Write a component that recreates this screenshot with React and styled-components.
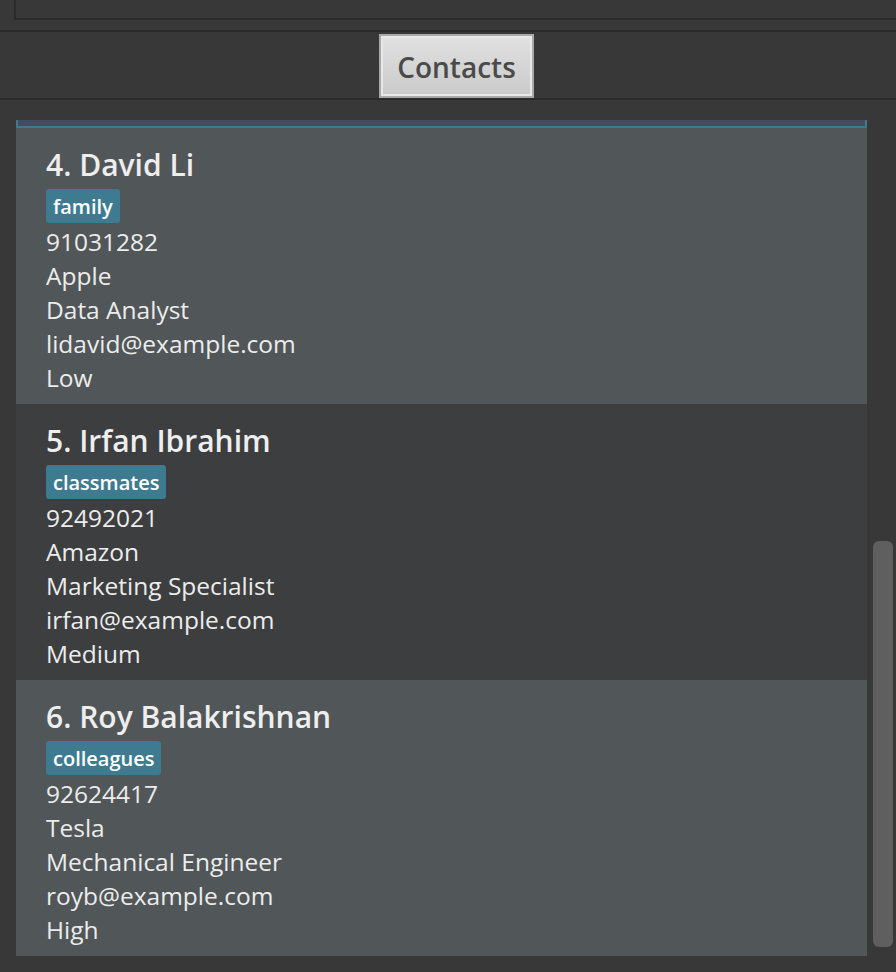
import React from 'react';
import styled, { createGlobalStyle } from 'styled-components';

const GlobalStyle = createGlobalStyle`
  html, body {
    margin: 0;
    padding: 0;
    background: #383838;
    overflow: hidden;
  }
  body {
    font-family: "Open Sans", "Noto Sans", "Liberation Sans", sans-serif;
  }
`;

const contacts = [
  { id: 3, name: '', tags: [], details: [], selected: true },
  {
    id: 4,
    name: 'David Li',
    tags: ['family'],
    details: ['91031282', 'Apple', 'Data Analyst', 'lidavid@example.com', 'Low'],
  },
  {
    id: 5,
    name: 'Irfan Ibrahim',
    tags: ['classmates'],
    details: ['92492021', 'Amazon', 'Marketing Specialist', 'irfan@example.com', 'Medium'],
  },
  {
    id: 6,
    name: 'Roy Balakrishnan',
    tags: ['colleagues'],
    details: ['92624417', 'Tesla', 'Mechanical Engineer', 'royb@example.com', 'High'],
  },
];

const scrollOffset = 268;

const Page = styled.div`
  width: 896px;
  height: 972px;
  display: flex;
  flex-direction: column;
  background: #383838;
`;

const TopPanel = styled.div`
  height: 30px;
  border-bottom: 2px solid #2b2b2b;
  padding-left: 14px;
  box-sizing: content-box;
`;

const ResultBox = styled.div`
  height: 18px;
  border-left: 2px solid #2b2b2b;
  border-bottom: 2px solid #2b2b2b;
`;

const ButtonBar = styled.div`
  height: 64px;
  padding-top: 2px;
  display: flex;
  justify-content: center;
  border-bottom: 2px solid #2b2b2b;
`;

const TabButton = styled.button`
  height: 64px;
  width: 155px;
  margin-left: 17px;
  box-sizing: border-box;
  border: 2px solid #a9a9a9;
  box-shadow: inset 0 0 0 2px #e8e8e8;
  background: linear-gradient(#e1e1e1, #cacaca);
  color: #4a4a4a;
  font-family: "Open Sans", "Noto Sans", sans-serif;
  font-size: 28px;
  font-weight: 600;
  padding: 0;
  padding-top: 1px;
`;

const ListArea = styled.div`
  flex: 1;
  display: flex;
  padding-top: 20px;
`;

const Viewport = styled.div`
  width: 851px;
  height: 836px;
  margin-left: 16px;
  overflow: hidden;
`;

const Card = styled.div`
  height: 276px;
  box-sizing: border-box;
  padding: 20px 0 0 30px;
  background: ${(props) => (props.selected ? '#424d5f' : props.odd ? '#515658' : '#3c3e3f')};
  border: ${(props) => (props.selected ? '2px solid #3e7b91' : 'none')};
`;

const Name = styled.div`
  height: 34px;
  line-height: 34px;
  margin-bottom: 7px;
  color: #eeeeee;
  font-size: 30px;
  font-weight: 600;
  white-space: nowrap;
`;

const TagRow = styled.div`
  display: flex;
  gap: 6px;
  margin-bottom: 2px;
`;

const Tag = styled.span`
  height: 34px;
  line-height: 35px;
  padding: 0 7px;
  border-radius: 3px;
  background: #3e7b91;
  color: #ffffff;
  font-size: 20px;
  font-weight: 600;
`;

const Detail = styled.div`
  height: 34px;
  line-height: 34px;
  color: #ececec;
  font-size: 24.5px;
  white-space: nowrap;
`;

const ScrollTrack = styled.div`
  width: 20px;
  margin-left: 6px;
  padding-top: 421px;
`;

const Thumb = styled.div`
  width: 20px;
  height: 406px;
  border-radius: 6px;
  background: #5f5f5f;
`;

const ContactCard = ({ contact, odd }) => (
  <Card selected={contact.selected} odd={odd}>
    {contact.name && (
      <Name>
        {contact.id}. {contact.name}
      </Name>
    )}
    {contact.tags.length > 0 && (
      <TagRow>
        {contact.tags.map((tag) => (
          <Tag key={tag}>{tag}</Tag>
        ))}
      </TagRow>
    )}
    {contact.details.map((line, index) => (
      <Detail key={index}>{line}</Detail>
    ))}
  </Card>
);

const App = () => {
  return (
    <Page>
      <GlobalStyle />
      <TopPanel>
        <ResultBox />
      </TopPanel>
      <ButtonBar>
        <TabButton>Contacts</TabButton>
      </ButtonBar>
      <ListArea>
        <Viewport>
          <div style={{ marginTop: -scrollOffset }}>
            {contacts.map((contact, index) => (
              <ContactCard key={contact.id} contact={contact} odd={index % 2 === 1} />
            ))}
          </div>
        </Viewport>
        <ScrollTrack>
          <Thumb />
        </ScrollTrack>
      </ListArea>
    </Page>
  );
};

export default App;
